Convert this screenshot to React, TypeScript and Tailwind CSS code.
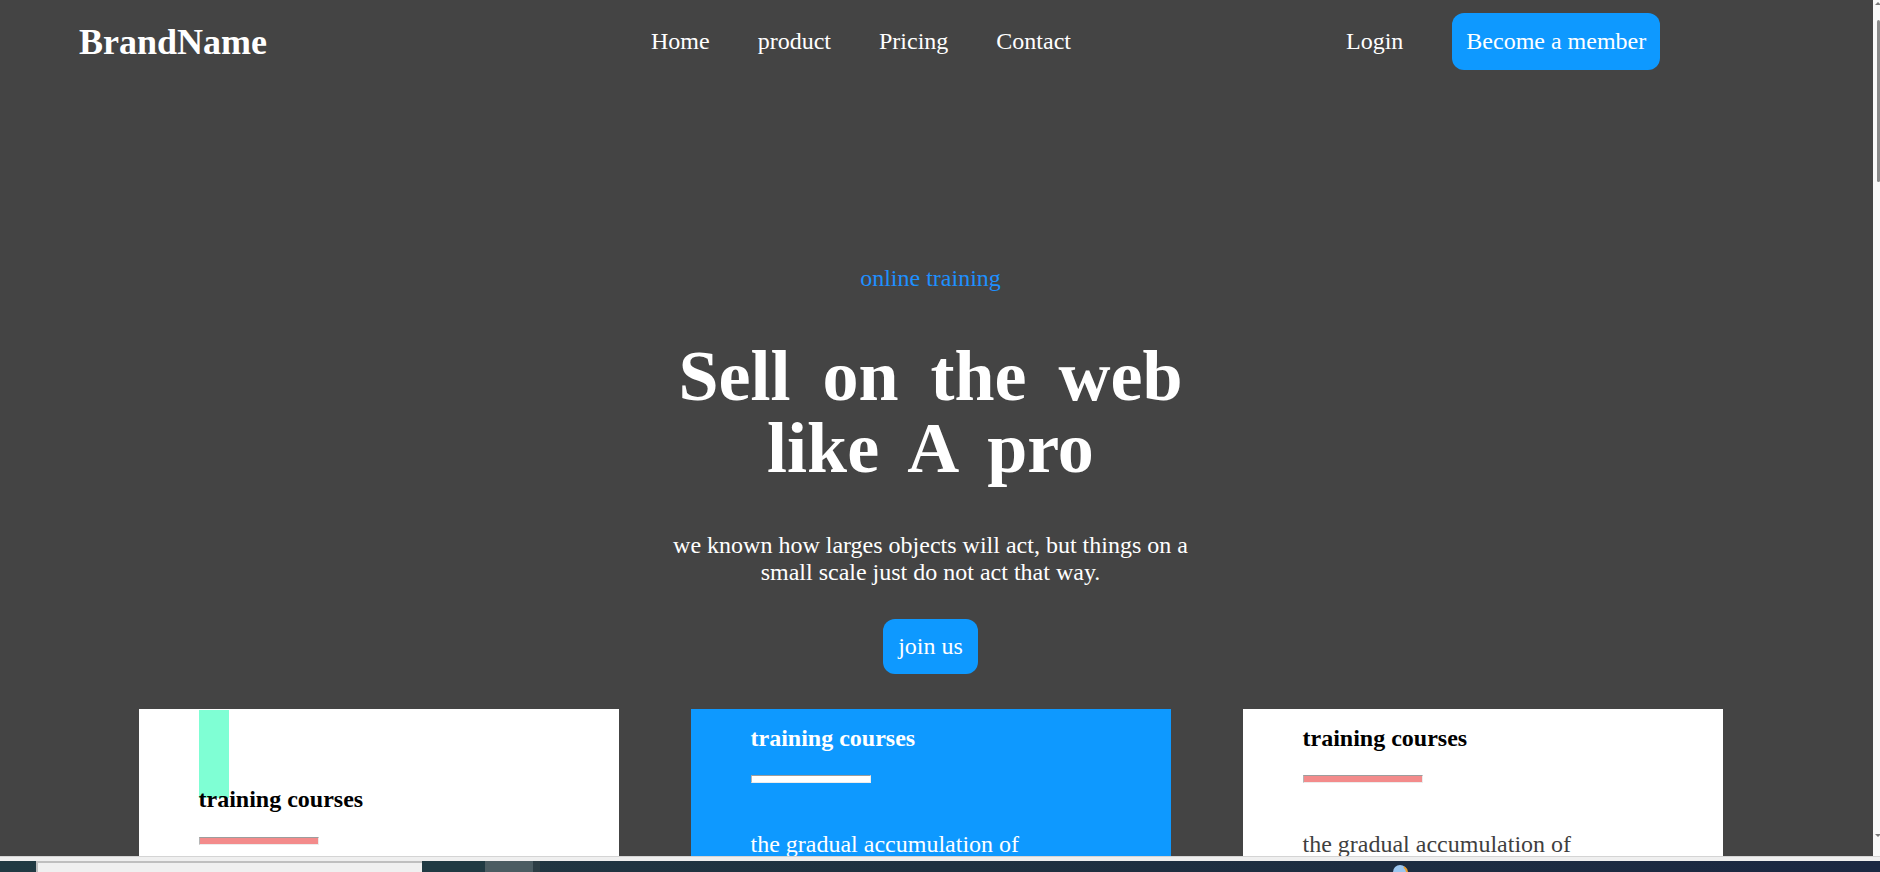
import React from "react";

const serif = "font-['Liberation_Serif','Times_New_Roman',serif]";

function Bar({ color }: { color: string }) {
  return (
    <div
      className={`w-[120px] h-[8px] border-t border-l border-t-[#9d9d9d] border-l-[#b5b5b5] border-b border-r border-b-[#ececec] border-r-[#ececec] ${color}`}
    />
  );
}

export default function App() {
  return (
    <div className={`w-[1880px] h-[872px] overflow-hidden bg-[#444444] ${serif}`}>
      <div className="flex h-[856px]">
        {/* page */}
        <div className="w-[1873px] h-[856px] overflow-hidden bg-[#444444] shrink-0">
          <nav className="flex items-center h-[83px] text-white">
            <div className="w-[651px] pl-[79px] shrink-0">
              <span className="text-[36px] font-bold leading-[normal]">BrandName</span>
            </div>
            <ul className="w-[695px] shrink-0 flex gap-[48px] text-[24px] leading-[normal]">
              <li>Home</li>
              <li>product</li>
              <li>Pricing</li>
              <li>Contact</li>
            </ul>
            <div className="flex items-center text-[24px] leading-[normal]">
              <span>Login</span>
              <button className="ml-[49px] bg-[#0e99ff] text-white rounded-[12px] px-[14px] py-[15px] leading-[normal]">
                Become a member
              </button>
            </div>
          </nav>

          <main className="w-[1861px] flex flex-col items-center">
            <p className="mt-[182px] text-[24px] leading-[normal] text-[#1e90ff]">online training</p>
            <h1 className="mt-[48px] text-[72px] leading-[72px] font-bold text-white text-center [word-spacing:14px]">
              Sell on the web
              <br />
              like A pro
            </h1>
            <p className="mt-[48px] w-[540px] text-center text-[24px] leading-[normal] text-white">
              we known how larges objects will act, but things on a small scale just do not act that way.
            </p>
            <button className="mt-[33px] bg-[#0e99ff] text-white text-[24px] leading-[normal] rounded-[12px] px-[15px] py-[14px]">
              join us
            </button>

            <div className="mt-[35px] flex gap-[72px]">
              {/* card 1 */}
              <div className="w-[480px] h-[400px] bg-white px-[60px] pt-[1px]">
                <div className="w-[30px] h-[88px] bg-[#7fffd4]" />
                <h3 className="-mt-[12px] text-[24px] font-bold leading-[normal] text-black relative">
                  training courses
                </h3>
                <div className="mt-[24px]">
                  <Bar color="bg-[#f38b8b]" />
                </div>
                <p className="mt-[48px] text-[24px] leading-[normal] text-[#3f3f3f]">
                  the gradual accumulation of information about atomic and small-scale behaviour during the first quarter of the 20th
                </p>
              </div>

              {/* card 2 */}
              <div className="w-[480px] h-[400px] bg-[#0e99ff] px-[60px] pt-[16px]">
                <h3 className="text-[24px] font-bold leading-[normal] text-white">training courses</h3>
                <div className="mt-[23px]">
                  <Bar color="bg-white" />
                </div>
                <p className="mt-[48px] text-[24px] leading-[normal] text-white">
                  the gradual accumulation of information about atomic and small-scale behaviour during the first quarter of the 20th
                </p>
              </div>

              {/* card 3 */}
              <div className="w-[480px] h-[400px] bg-white px-[60px] pt-[16px]">
                <h3 className="text-[24px] font-bold leading-[normal] text-black">training courses</h3>
                <div className="mt-[23px]">
                  <Bar color="bg-[#f38b8b]" />
                </div>
                <p className="mt-[48px] text-[24px] leading-[normal] text-[#3f3f3f]">
                  the gradual accumulation of information about atomic and small-scale behaviour during the first quarter of the 20th
                </p>
              </div>
            </div>
          </main>
        </div>

        {/* scrollbar */}
        <div className="relative w-[7px] h-[856px] bg-[#f9f9f9]">
          <div className="absolute left-[2px] top-[2px] w-0 h-0 border-l-[3px] border-r-[3px] border-b-[3px] border-l-transparent border-r-transparent border-b-[#7a7a7a]" />
          <div className="absolute right-0 top-[20px] w-[3px] h-[162px] rounded-full bg-[#8a8a8a]" />
          <div className="absolute left-[2px] top-[834px] w-0 h-0 border-l-[3px] border-r-[3px] border-t-[3px] border-l-transparent border-r-transparent border-t-[#7a7a7a]" />
        </div>
      </div>

      {/* browser bottom edge */}
      <div className="h-[1px] bg-[#d4d4d4]" />
      <div className="h-[4px] bg-[#efefef]" />

      {/* taskbar */}
      <div className="flex h-[11px] bg-gradient-to-r from-[#213a43] via-[#1f3140] to-[#1b2842]">
        <div className="w-[36px] shrink-0" />
        <div className="w-[386px] shrink-0 bg-[#f0f0f0] border-t-[2px] border-l-[2px] border-[#bfbfbf]" />
        <div className="w-[63px] shrink-0 bg-[#203a43]" />
        <div className="w-[48px] shrink-0 bg-[#4b5c62]" />
        <div className="w-[7px] shrink-0 bg-[#2c3d44]" />
        <div className="w-[851px] shrink-0" />
        <div className="w-[20px] shrink-0 relative overflow-hidden">
          <svg width="20" height="11" viewBox="0 0 20 11" className="absolute left-0 top-[2px]">
            <circle cx="9" cy="9" r="7" fill="#9cc6ef" />
            <path d="M13 4 A7 7 0 0 1 16 9" stroke="#f0a030" strokeWidth="2" fill="none" />
          </svg>
        </div>
      </div>
    </div>
  );
}
